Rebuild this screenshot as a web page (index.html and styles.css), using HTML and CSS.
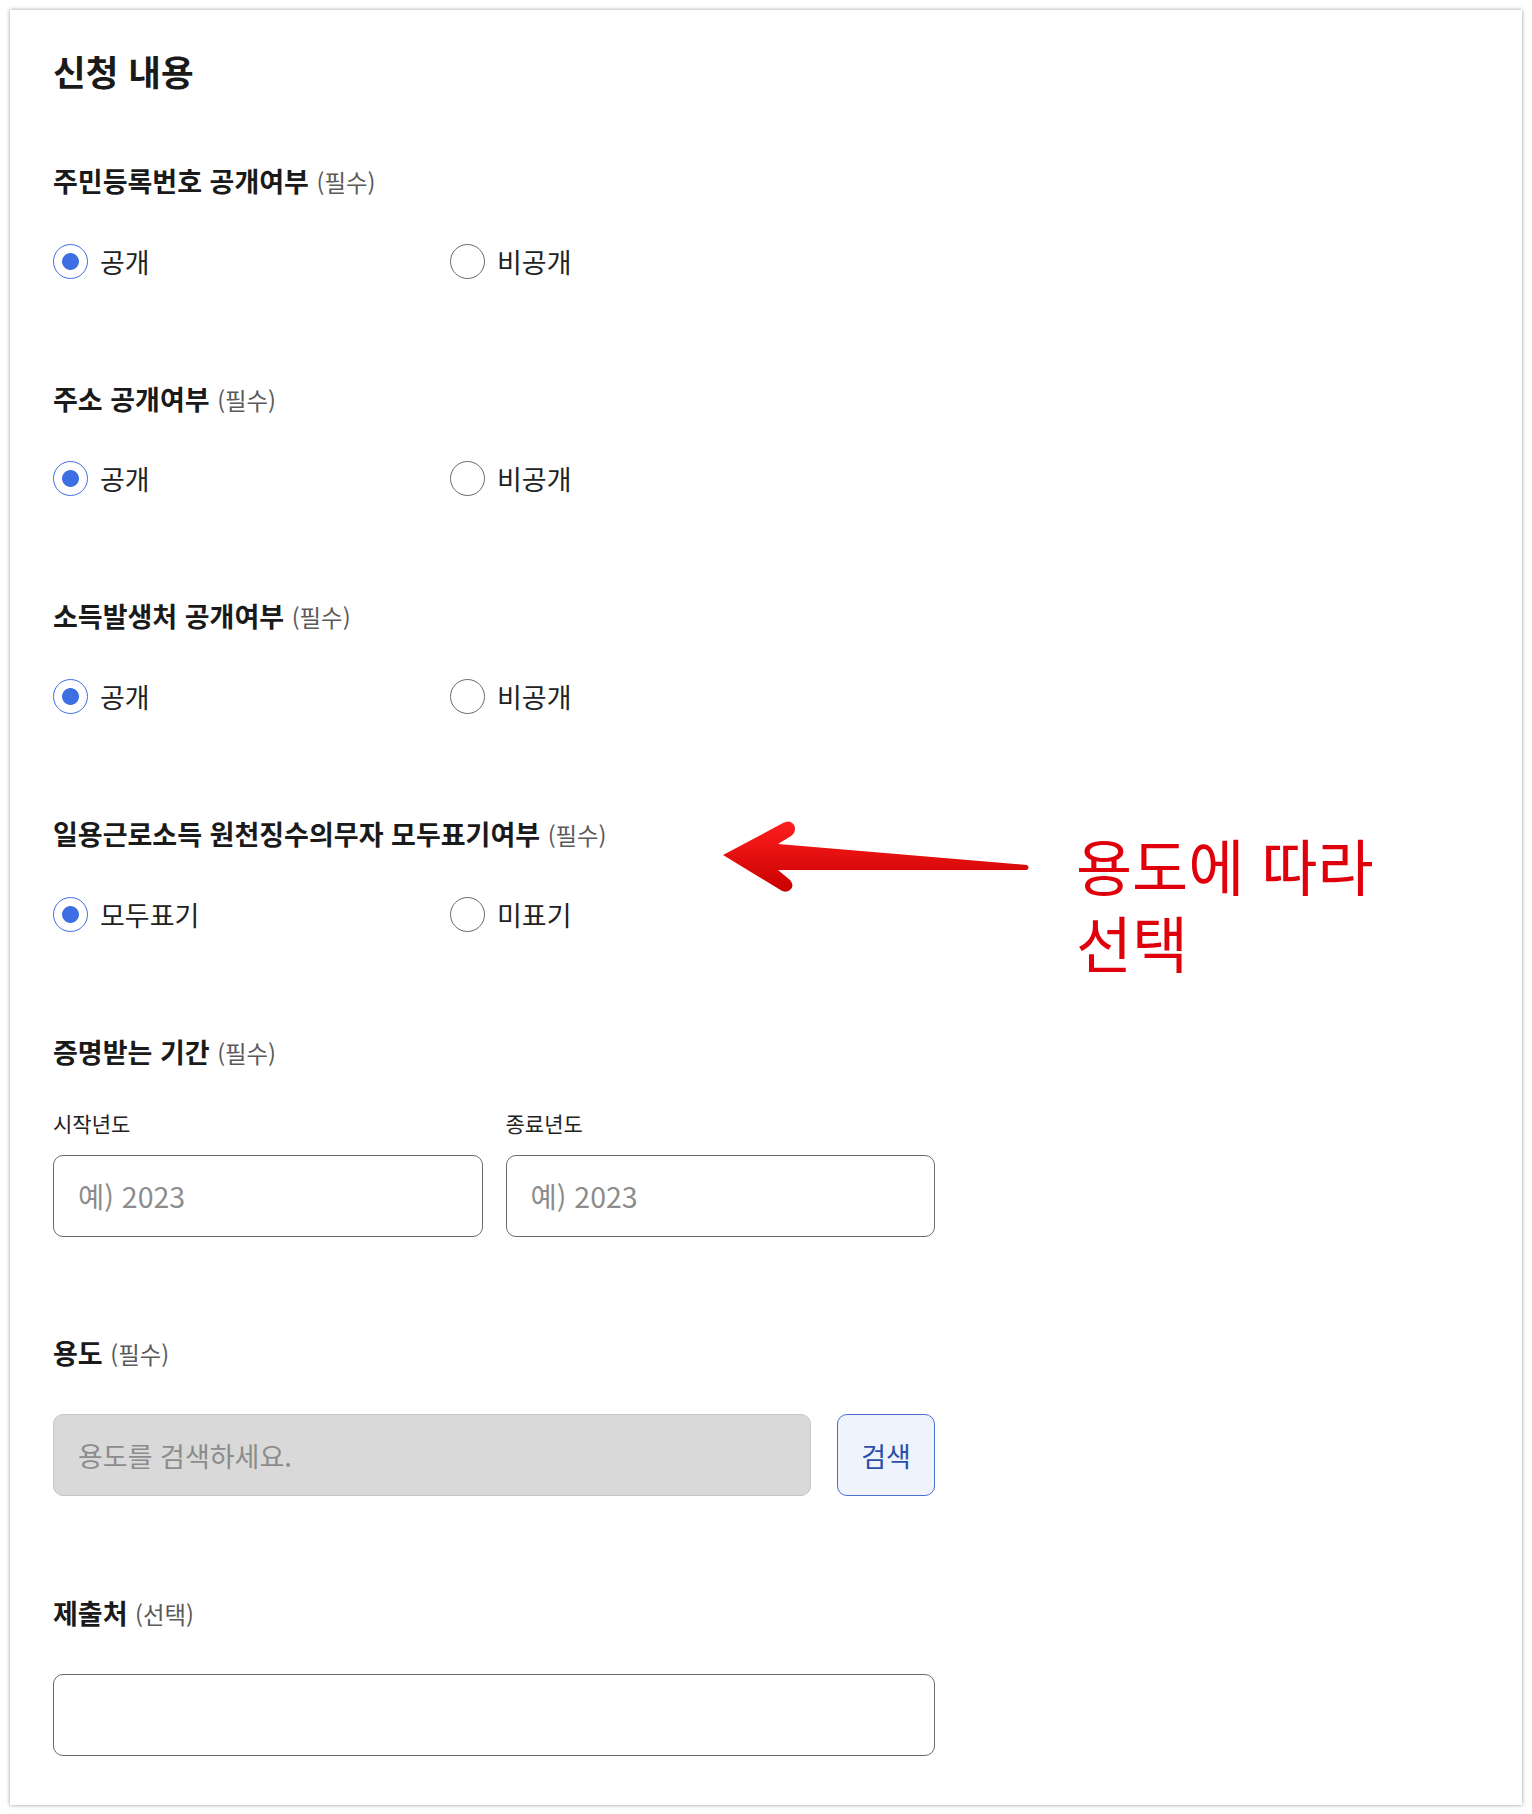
FILE: index.html
```html
<!DOCTYPE html>
<html lang="ko">
<head>
<meta charset="utf-8">
<title>신청 내용</title>
<link rel="stylesheet" href="styles.css">
</head>
<body>
<div class="card">
  <h2 class="title">신청 내용</h2>

  <section class="field">
    <div class="label"><strong>주민등록번호 공개여부</strong> <span class="req">(필수)</span></div>
    <div class="radios">
      <label class="radio"><input type="radio" name="r1" checked><span>공개</span></label>
      <label class="radio"><input type="radio" name="r1"><span>비공개</span></label>
    </div>
  </section>

  <section class="field">
    <div class="label"><strong>주소 공개여부</strong> <span class="req">(필수)</span></div>
    <div class="radios">
      <label class="radio"><input type="radio" name="r2" checked><span>공개</span></label>
      <label class="radio"><input type="radio" name="r2"><span>비공개</span></label>
    </div>
  </section>

  <section class="field">
    <div class="label"><strong>소득발생처 공개여부</strong> <span class="req">(필수)</span></div>
    <div class="radios">
      <label class="radio"><input type="radio" name="r3" checked><span>공개</span></label>
      <label class="radio"><input type="radio" name="r3"><span>비공개</span></label>
    </div>
  </section>

  <section class="field">
    <div class="label"><strong>일용근로소득 원천징수의무자 모두표기여부</strong> <span class="req">(필수)</span></div>
    <div class="radios">
      <label class="radio"><input type="radio" name="r4" checked><span>모두표기</span></label>
      <label class="radio"><input type="radio" name="r4"><span>미표기</span></label>
    </div>
  </section>

  <section class="field">
    <div class="label label-period"><strong>증명받는 기간</strong> <span class="req">(필수)</span></div>
    <div class="period">
      <div class="period-col">
        <div class="sublabel">시작년도</div>
        <input class="text-input year-input" type="text" placeholder="예) 2023">
      </div>
      <div class="period-col">
        <div class="sublabel">종료년도</div>
        <input class="text-input year-input" type="text" placeholder="예) 2023">
      </div>
    </div>
  </section>

  <section class="field">
    <div class="label label-input"><strong>용도</strong> <span class="req">(필수)</span></div>
    <div class="search-row">
      <input class="text-input search-input" type="text" placeholder="용도를 검색하세요." disabled>
      <button class="search-btn" type="button">검색</button>
    </div>
  </section>

  <section class="field">
    <div class="label label-input"><strong>제출처</strong> <span class="req">(선택)</span></div>
    <input class="text-input full" type="text">
  </section>

  <svg class="arrow" viewBox="0 0 320 95" width="320" height="95" aria-hidden="true">
    <defs>
      <linearGradient id="ag" x1="0" y1="0" x2="0" y2="1">
        <stop offset="0" stop-color="#ff1e1e"/>
        <stop offset="1" stop-color="#c80000"/>
      </linearGradient>
    </defs>
    <path d="M8,45 L68,13 Q75,9 79,15 Q82,21 76,26 L63,34 L312,55 Q315,57.5 312,60 L63,60 L75,70 Q80,76 75,80 Q70,84 64,79 Z" fill="url(#ag)"/>
  </svg>
  <div class="note">
    <div class="note-line">용도에 따라</div>
    <div class="note-line">선택</div>
  </div>
</div>
</body>
</html>
```

FILE: styles.css
```css
body {
  margin: 0;
  background: #ffffff;
  font-family: "Noto Sans CJK KR", "Noto Sans", sans-serif;
  color: #1e1e1e;
}

.card {
  position: relative;
  box-sizing: border-box;
  margin: 10px;
  width: 1512px;
  height: 1795px;
  padding: 41px 43px 0;
  background: #ffffff;
  box-shadow: 0 0 4px rgba(0, 0, 0, 0.4);
}

.title {
  margin: 0 0 75px;
  font-size: 35.5px;
  line-height: 40px;
  font-weight: 700;
  color: #1a1a1a;
}

.field {
  width: 882px;
}

.field + .field {
  margin-top: 101.7px;
}

.label {
  font-size: 27px;
  line-height: 30px;
  margin-bottom: 43px;
  white-space: nowrap;
}

.label-period {
  margin-bottom: 42px;
}

.label-input {
  margin-bottom: 45px;
}

.label strong {
  font-weight: 700;
  color: #1a1a1a;
}

.req {
  font-size: 23.4px;
  color: #5a5a5a;
  font-weight: 400;
}

.radios {
  display: flex;
  height: 42px;
}

.radio {
  display: flex;
  align-items: center;
  gap: 12px;
  width: 397px;
  font-size: 27px;
  color: #222;
  cursor: pointer;
}

.radio input {
  appearance: none;
  -webkit-appearance: none;
  margin: 0;
  width: 35px;
  height: 35px;
  box-sizing: border-box;
  border: 1px solid #6a6a6a;
  border-radius: 50%;
  background: #fff;
  flex: none;
}

.radio input:checked {
  border-color: #3d6fe3;
  background: radial-gradient(circle, #3d6fe3 0, #3d6fe3 8px, #ffffff 8.8px);
}

.period {
  display: flex;
  gap: 23px;
}

.period-col {
  flex: 1;
}

.sublabel {
  font-size: 21px;
  line-height: 26px;
  color: #222;
  margin-top: 0;
  margin-bottom: 19px;
}

.text-input {
  display: block;
  box-sizing: border-box;
  width: 100%;
  height: 82px;
  padding: 0 24px;
  border: 1px solid #6a6a6a;
  border-radius: 10px;
  background: #fff;
  font-family: inherit;
  font-size: 27px;
  color: #222;
  outline: none;
}

.year-input {
  font-size: 28.5px;
}

.text-input::placeholder {
  color: #8c8c8c;
}

.search-row {
  display: flex;
  gap: 26px;
}

.search-input {
  flex: 1;
  width: auto;
  background: #d9d9d9;
  border-color: #c6c6c6;
}

.search-btn {
  width: 98px;
  height: 82px;
  box-sizing: border-box;
  border: 1px solid #4b6fcf;
  border-radius: 10px;
  background: #eef3fd;
  color: #2a4fa6;
  font-family: inherit;
  font-size: 27px;
  padding: 0;
  cursor: pointer;
}

.arrow {
  position: absolute;
  left: 705px;
  top: 800px;
}

.note {
  position: absolute;
  left: 1066px;
  top: 816px;
  color: #e0000c;
  font-size: 61px;
  font-weight: 400;
}

.note-line {
  height: 77px;
  line-height: 77px;
  white-space: nowrap;
}
```
